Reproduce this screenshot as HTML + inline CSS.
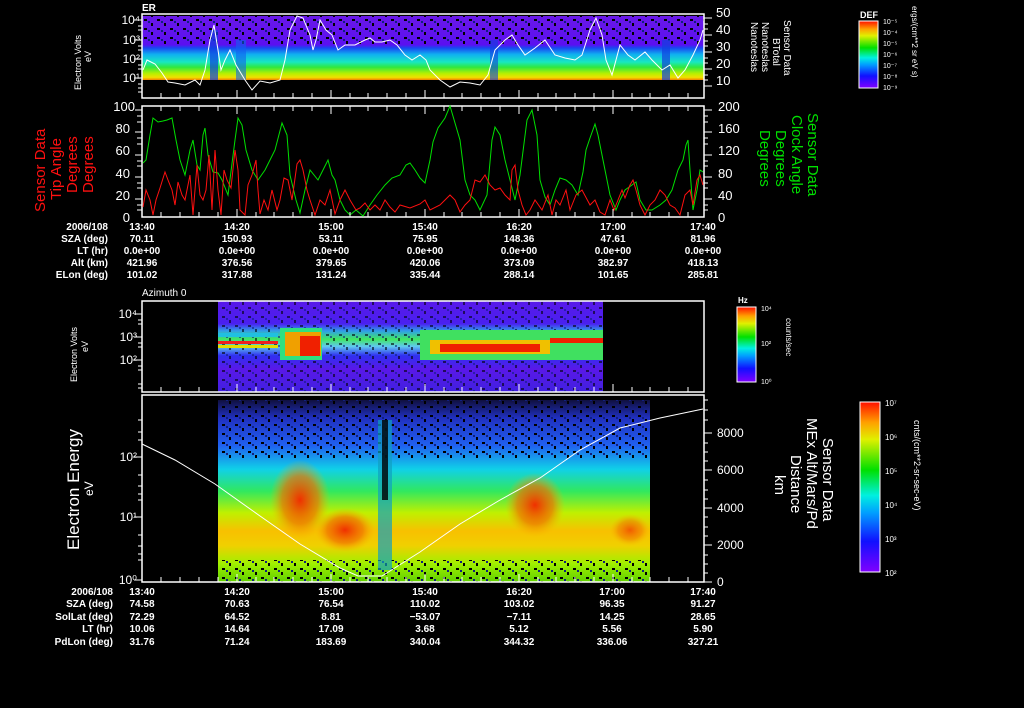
<!DOCTYPE html>
<html><head><meta charset="utf-8"><style>
html,body{margin:0;padding:0;background:#000;}
svg{display:block;}
text{font-family:"Liberation Sans",sans-serif;fill:#fff;}
</style></head><body>
<svg width="1024" height="708" viewBox="0 0 1024 708" xmlns="http://www.w3.org/2000/svg" font-weight="bold">
<defs>
<linearGradient id="g1" x1="0" y1="0" x2="0" y2="1">
<stop offset="0" stop-color="#6a18e8"/><stop offset="0.45" stop-color="#5a10f0"/>
<stop offset="0.5" stop-color="#1848f0"/><stop offset="0.6" stop-color="#10b0f0"/>
<stop offset="0.72" stop-color="#18e8c0"/><stop offset="0.8" stop-color="#30e840"/>
<stop offset="0.9" stop-color="#b8f000"/><stop offset="0.96" stop-color="#f0e000"/><stop offset="1" stop-color="#f08000"/>
</linearGradient>
<linearGradient id="g3" x1="0" y1="0" x2="0" y2="1">
<stop offset="0" stop-color="#5818e8"/><stop offset="0.25" stop-color="#4a20f0"/>
<stop offset="0.33" stop-color="#30a0e8"/><stop offset="0.42" stop-color="#40e860"/>
<stop offset="0.5" stop-color="#60c8f0"/><stop offset="0.6" stop-color="#3030f0"/>
<stop offset="0.75" stop-color="#5a18e8"/><stop offset="1" stop-color="#4020e0"/>
</linearGradient>
<linearGradient id="g4" x1="0" y1="0" x2="0" y2="1">
<stop offset="0" stop-color="#101040"/><stop offset="0.1" stop-color="#2030c0"/>
<stop offset="0.25" stop-color="#2060f0"/><stop offset="0.38" stop-color="#10d0e8"/>
<stop offset="0.5" stop-color="#30e860"/><stop offset="0.62" stop-color="#c0f000"/>
<stop offset="0.72" stop-color="#f8c000"/><stop offset="0.8" stop-color="#f0d000"/>
<stop offset="0.9" stop-color="#a0f000"/><stop offset="1" stop-color="#60d000"/>
</linearGradient>
<linearGradient id="cb" x1="0" y1="1" x2="0" y2="0">
<stop offset="0" stop-color="#8000ff"/><stop offset="0.18" stop-color="#1010ff"/>
<stop offset="0.35" stop-color="#00a0ff"/><stop offset="0.45" stop-color="#00f0e0"/>
<stop offset="0.6" stop-color="#00e000"/><stop offset="0.78" stop-color="#e0f000"/>
<stop offset="0.88" stop-color="#ffa000"/><stop offset="1" stop-color="#ff1000"/>
</linearGradient>
<radialGradient id="hot"><stop offset="0" stop-color="#f03000"/><stop offset="0.6" stop-color="#f07000" stop-opacity="0.7"/><stop offset="1" stop-color="#f8b000" stop-opacity="0"/></radialGradient>
<pattern id="spk" width="13" height="9" patternUnits="userSpaceOnUse">
<rect x="1" y="1" width="3" height="2" fill="#000"/><rect x="8" y="5" width="2" height="3" fill="#000"/><rect x="5" y="3" width="2" height="2" fill="#102080"/>
</pattern>
</defs>

<!-- Panel 1 -->
<text x="142" y="11" font-size="10">ER</text>
<rect x="142" y="16" width="562" height="64" fill="url(#g1)"/>
<rect x="142" y="16" width="562" height="28" fill="url(#spk)"/>
<rect x="210" y="30" width="8" height="50" fill="#1040e0" opacity="0.7"/>
<rect x="236" y="40" width="10" height="40" fill="#1060f0" opacity="0.6"/>
<rect x="490" y="40" width="8" height="40" fill="#1040e0" opacity="0.6"/>
<rect x="662" y="40" width="8" height="40" fill="#1040e0" opacity="0.7"/>
<polyline fill="none" stroke="#fff" stroke-width="1" points="143,70 147,60 155,64 162,73 168,82 175,83 185,85 195,80 200,85 205,70 210,40 214,25 218,50 221,70 225,60 230,50 236,65 245,80 252,90 260,81 270,83 280,80 285,60 290,30 297,16 303,18 310,35 313,50 316,40 320,20 326,30 332,35 338,50 345,45 355,45 365,40 370,38 375,42 382,42 390,40 397,45 405,55 412,60 420,55 426,60 430,70 440,80 450,87 460,82 470,83 480,85 488,75 495,50 505,40 512,35 518,45 525,55 535,48 545,40 555,55 565,58 575,60 582,55 590,30 596,18 602,35 606,60 612,75 620,45 628,55 635,60 645,52 652,60 662,70 670,65 678,78 685,70 693,55 700,40 703,30"/>
<rect x="142" y="14" width="562" height="84" fill="none" stroke="#fff" stroke-width="1.5"/>
<g font-weight="normal">
<text x="140" y="24" font-size="12" text-anchor="end">10⁴</text>
<text x="140" y="44" font-size="12" text-anchor="end">10³</text>
<text x="140" y="63" font-size="12" text-anchor="end">10²</text>
<text x="140" y="82" font-size="12" text-anchor="end">10¹</text>
</g>
<g font-size="13" font-weight="normal">
<text x="716" y="17">50</text><text x="716" y="34">40</text><text x="716" y="51">30</text><text x="716" y="68">20</text><text x="716" y="85">10</text></g>
<g font-weight="normal">
<text transform="translate(81,90) rotate(-90)" font-size="9">Electron Volts</text>
<text transform="translate(91,62) rotate(-90)" font-size="9">eV</text>
</g>
<g font-size="10" font-weight="normal">
<text transform="translate(784,20) rotate(90)">Sensor Data</text>
<text transform="translate(773,38) rotate(90)">BTotal</text>
<text transform="translate(762,22) rotate(90)">Nanoteslas</text>
<text transform="translate(751,22) rotate(90)">Nanoteslas</text>
</g>
<text x="860" y="18" font-size="9">DEF</text>
<rect x="859" y="21" width="19" height="67" fill="url(#cb)" stroke="#fff"/>
<g font-size="7" font-weight="normal"><text x="883" y="24">10⁻⁵</text><text x="883" y="35">10⁻⁴</text><text x="883" y="46">10⁻⁵</text><text x="883" y="57">10⁻⁶</text><text x="883" y="68">10⁻⁷</text><text x="883" y="79">10⁻⁸</text><text x="883" y="90">10⁻⁹</text></g>
<text transform="translate(912,6) rotate(90)" font-size="8" font-weight="normal">ergs/(cm**2 sr eV s)</text>

<!-- Panel 2 -->
<rect x="142" y="106" width="562" height="111" fill="none" stroke="#fff" stroke-width="1.5"/>
<g font-size="13" font-weight="normal">
<text x="135" y="111" text-anchor="end">100</text><text x="130" y="133" text-anchor="end">80</text>
<text x="130" y="155" text-anchor="end">60</text><text x="130" y="178" text-anchor="end">40</text>
<text x="130" y="200" text-anchor="end">20</text><text x="130" y="222" text-anchor="end">0</text>
<text x="718" y="111">200</text><text x="718" y="133">160</text><text x="718" y="155">120</text>
<text x="718" y="178">80</text><text x="718" y="200">40</text><text x="718" y="222">0</text></g>
<polyline fill="none" stroke="#00e000" stroke-width="1" points="143,163 146,160 150,135 153,118 158,122 163,121 167,120 172,118 176,140 180,160 185,175 190,150 193,140 197,165 200,170 203,135 205,128 208,155 213,172 218,173 222,180 228,195 235,140 238,118 242,125 246,150 252,170 258,180 265,170 270,160 275,150 282,123 287,135 290,175 296,200 300,213 305,190 310,170 318,180 323,170 328,160 332,175 335,180 340,200 345,210 350,215 356,210 363,216 370,205 377,195 385,185 392,178 400,175 406,165 410,163 415,170 420,178 425,183 430,160 433,142 438,128 445,118 450,106 455,123 460,140 465,180 470,195 475,200 480,210 487,195 492,140 495,127 500,135 505,160 510,180 515,200 520,175 527,120 532,110 537,135 540,180 545,197 550,205 555,190 560,178 566,180 572,185 578,195 583,172 586,150 590,138 595,124 598,135 603,160 606,175 610,195 616,210 620,200 625,190 632,185 636,182 640,200 646,210 652,210 660,205 666,200 672,190 678,170 683,160 686,145 688,140 690,170 693,210 697,190 700,170 703,172"/>
<polyline fill="none" stroke="#ff1010" stroke-width="1" points="143,207 146,190 150,200 153,215 156,200 160,188 165,172 168,180 172,190 175,205 178,182 182,195 185,200 190,175 193,215 197,165 200,195 203,200 206,190 209,155 212,210 215,150 218,190 221,215 224,170 227,180 231,188 235,150 238,170 240,210 245,215 248,185 252,175 256,160 258,190 260,214 264,200 268,210 272,190 277,210 280,200 284,178 288,180 292,200 297,164 300,160 303,170 307,190 310,200 315,215 320,200 325,205 330,190 335,214 340,200 345,190 350,200 356,210 360,208 365,203 370,210 375,205 380,210 385,200 390,207 395,212 400,205 410,208 420,204 425,200 430,210 440,205 450,195 455,200 460,212 465,205 470,200 475,180 480,182 485,175 490,185 495,190 500,188 505,195 510,200 512,170 515,165 518,190 522,205 526,215 530,210 535,200 542,210 548,195 552,215 556,200 560,205 566,190 570,210 576,195 582,190 590,205 595,200 600,212 605,215 610,200 614,210 618,200 622,190 625,198 630,185 633,180 636,190 640,205 645,215 650,205 655,200 660,190 665,195 670,205 675,208 680,215 685,195 690,190 693,205 697,180 700,175 703,185"/>
<g font-size="15" font-weight="normal">
<text transform="translate(45,212) rotate(-90)" style="fill:#ff1010">Sensor Data</text>
<text transform="translate(61,200) rotate(-90)" style="fill:#ff1010">Tip Angle</text>
<text transform="translate(77,193) rotate(-90)" style="fill:#ff1010">Degrees</text>
<text transform="translate(93,193) rotate(-90)" style="fill:#ff1010">Degrees</text>
</g>
<g font-size="15" font-weight="normal">
<text transform="translate(808,113) rotate(90)" style="fill:#00e000">Sensor Data</text>
<text transform="translate(792,115) rotate(90)" style="fill:#00e000">Clock Angle</text>
<text transform="translate(776,130) rotate(90)" style="fill:#00e000">Degrees</text>
<text transform="translate(760,130) rotate(90)" style="fill:#00e000">Degrees</text>
</g>
<g font-size="10">
<g text-anchor="end"><text x="108" y="230">2006/108</text><text x="108" y="242">SZA (deg)</text><text x="108" y="254">LT (hr)</text><text x="108" y="266">Alt (km)</text><text x="108" y="278">ELon (deg)</text></g>
<g text-anchor="middle">
<text x="142" y="230">13:40</text><text x="142" y="242">70.11</text><text x="142" y="254">0.0e+00</text><text x="142" y="266">421.96</text><text x="142" y="278">101.02</text>
<text x="237" y="230">14:20</text><text x="237" y="242">150.93</text><text x="237" y="254">0.0e+00</text><text x="237" y="266">376.56</text><text x="237" y="278">317.88</text>
<text x="331" y="230">15:00</text><text x="331" y="242">53.11</text><text x="331" y="254">0.0e+00</text><text x="331" y="266">379.65</text><text x="331" y="278">131.24</text>
<text x="425" y="230">15:40</text><text x="425" y="242">75.95</text><text x="425" y="254">0.0e+00</text><text x="425" y="266">420.06</text><text x="425" y="278">335.44</text>
<text x="519" y="230">16:20</text><text x="519" y="242">148.36</text><text x="519" y="254">0.0e+00</text><text x="519" y="266">373.09</text><text x="519" y="278">288.14</text>
<text x="613" y="230">17:00</text><text x="613" y="242">47.61</text><text x="613" y="254">0.0e+00</text><text x="613" y="266">382.97</text><text x="613" y="278">101.65</text>
<text x="703" y="230">17:40</text><text x="703" y="242">81.96</text><text x="703" y="254">0.0e+00</text><text x="703" y="266">418.13</text><text x="703" y="278">285.81</text>
</g></g>

<!-- Panel 3 -->
<text x="142" y="296" font-size="10" font-weight="normal">Azimuth 0</text>
<rect x="218" y="301" width="385" height="91" fill="url(#g3)"/>
<rect x="218" y="301" width="385" height="91" fill="url(#spk)" opacity="0.6"/>
<rect x="218" y="333" width="60" height="4" fill="#20c0e0"/>
<rect x="218" y="341" width="60" height="3" fill="#f02020"/>
<rect x="218" y="345" width="60" height="3" fill="#e0e000"/>
<rect x="280" y="328" width="42" height="32" fill="#30e080"/>
<rect x="285" y="332" width="36" height="24" fill="#f0a000"/>
<rect x="300" y="336" width="20" height="20" fill="#f02000"/>
<rect x="420" y="330" width="183" height="30" fill="#40e060"/>
<rect x="430" y="340" width="120" height="14" fill="#f0c000"/>
<rect x="440" y="344" width="100" height="8" fill="#f02000"/>
<rect x="550" y="338" width="53" height="5" fill="#f02000"/>
<rect x="142" y="301" width="562" height="91" fill="none" stroke="#fff" stroke-width="1.5"/>
<g font-size="12" font-weight="normal"><text x="137" y="318" text-anchor="end">10⁴</text><text x="137" y="341" text-anchor="end">10³</text><text x="137" y="364" text-anchor="end">10²</text></g>
<text transform="translate(77,382) rotate(-90)" font-size="9" font-weight="normal">Electron Volts</text>
<text transform="translate(88,352) rotate(-90)" font-size="9" font-weight="normal">eV</text>
<text x="738" y="303" font-size="8">Hz</text>
<rect x="737" y="307" width="19" height="75" fill="url(#cb)" stroke="#fff"/>
<g font-size="7" font-weight="normal"><text x="761" y="311">10⁴</text><text x="761" y="346">10²</text><text x="761" y="384">10⁰</text></g>
<text transform="translate(786,318) rotate(90)" font-size="8" font-weight="normal">counts/sec</text>

<!-- Panel 4 -->
<rect x="218" y="400" width="432" height="182" fill="url(#g4)"/>
<rect x="218" y="400" width="432" height="60" fill="url(#spk)"/>
<rect x="218" y="560" width="432" height="22" fill="url(#spk)"/>
<ellipse cx="300" cy="500" rx="30" ry="40" fill="url(#hot)"/>
<ellipse cx="345" cy="530" rx="30" ry="22" fill="url(#hot)"/>
<ellipse cx="535" cy="505" rx="30" ry="32" fill="url(#hot)"/>
<ellipse cx="630" cy="530" rx="20" ry="16" fill="url(#hot)" opacity="0.7"/>
<rect x="378" y="420" width="14" height="150" fill="#10a0c0" opacity="0.7"/>
<rect x="382" y="420" width="6" height="80" fill="#000" opacity="0.8"/>
<polyline fill="none" stroke="#fff" stroke-width="1" points="142,444 175,460 215,484 260,516 300,544 340,568 358,576 382,576 420,552 460,524 500,500 540,478 580,450 620,428 660,418 703,409"/>
<rect x="142" y="395" width="562" height="187" fill="none" stroke="#fff" stroke-width="1.5"/>
<g font-size="12" font-weight="normal">
<text x="137" y="461" text-anchor="end">10²</text><text x="137" y="521" text-anchor="end">10¹</text><text x="137" y="584" text-anchor="end">10⁰</text>
<text x="717" y="437">8000</text><text x="717" y="474">6000</text><text x="717" y="512">4000</text><text x="717" y="549">2000</text><text x="717" y="586">0</text></g>
<text transform="translate(79,550) rotate(-90)" font-size="17" font-weight="normal">Electron Energy</text>
<text transform="translate(93,496) rotate(-90)" font-size="12" font-weight="normal">eV</text>
<g font-size="15" font-weight="normal">
<text transform="translate(823,438) rotate(90)">Sensor Data</text>
<text transform="translate(807,418) rotate(90)">MEx Alt/Mars/Pd</text>
<text transform="translate(791,455) rotate(90)">Distance</text>
<text transform="translate(775,475) rotate(90)">km</text>
</g>
<rect x="860" y="402" width="20" height="170" fill="url(#cb)" stroke="#fff"/>
<g font-size="8" font-weight="normal"><text x="885" y="406">10⁷</text><text x="885" y="440">10⁶</text><text x="885" y="474">10⁵</text><text x="885" y="508">10⁴</text><text x="885" y="542">10³</text><text x="885" y="576">10²</text></g>
<text transform="translate(914,420) rotate(90)" font-size="9" font-weight="normal">cnts/(cm**2-sr-sec-eV)</text>
<g font-size="10">
<g text-anchor="end"><text x="113" y="595">2006/108</text><text x="113" y="607">SZA (deg)</text><text x="113" y="620">SolLat (deg)</text><text x="113" y="632">LT (hr)</text><text x="113" y="645">PdLon (deg)</text></g>
<g text-anchor="middle">
<text x="142" y="595">13:40</text><text x="142" y="607">74.58</text><text x="142" y="620">72.29</text><text x="142" y="632">10.06</text><text x="142" y="645">31.76</text>
<text x="237" y="595">14:20</text><text x="237" y="607">70.63</text><text x="237" y="620">64.52</text><text x="237" y="632">14.64</text><text x="237" y="645">71.24</text>
<text x="331" y="595">15:00</text><text x="331" y="607">76.54</text><text x="331" y="620">8.81</text><text x="331" y="632">17.09</text><text x="331" y="645">183.69</text>
<text x="425" y="595">15:40</text><text x="425" y="607">110.02</text><text x="425" y="620">−53.07</text><text x="425" y="632">3.68</text><text x="425" y="645">340.04</text>
<text x="519" y="595">16:20</text><text x="519" y="607">103.02</text><text x="519" y="620">−7.11</text><text x="519" y="632">5.12</text><text x="519" y="645">344.32</text>
<text x="612" y="595">17:00</text><text x="612" y="607">96.35</text><text x="612" y="620">14.25</text><text x="612" y="632">5.56</text><text x="612" y="645">336.06</text>
<text x="703" y="595">17:40</text><text x="703" y="607">91.27</text><text x="703" y="620">28.65</text><text x="703" y="632">5.90</text><text x="703" y="645">327.21</text>
</g></g>

<!-- ticks -->
<g stroke="#fff" stroke-width="1">
<path d="M161,98v-5M180,98v-5M199,98v-5M218,98v-5M237,98v-8M256,98v-5M274,98v-5M293,98v-5M312,98v-5M331,98v-8M350,98v-5M368,98v-5M387,98v-5M406,98v-5M425,98v-8M444,98v-5M462,98v-5M481,98v-5M500,98v-5M519,98v-8M538,98v-5M556,98v-5M575,98v-5M594,98v-5M613,98v-8M632,98v-5M650,98v-5M669,98v-5M688,98v-5"/>
<path d="M161,217v-5M180,217v-5M199,217v-5M218,217v-5M237,217v-8M256,217v-5M274,217v-5M293,217v-5M312,217v-5M331,217v-8M350,217v-5M368,217v-5M387,217v-5M406,217v-5M425,217v-8M444,217v-5M462,217v-5M481,217v-5M500,217v-5M519,217v-8M538,217v-5M556,217v-5M575,217v-5M594,217v-5M613,217v-8M632,217v-5M650,217v-5M669,217v-5M688,217v-5"/>
<path d="M161,106v5M180,106v5M199,106v5M218,106v5M237,106v8M256,106v5M274,106v5M293,106v5M312,106v5M331,106v8M350,106v5M368,106v5M387,106v5M406,106v5M425,106v8M444,106v5M462,106v5M481,106v5M500,106v5M519,106v8M538,106v5M556,106v5M575,106v5M594,106v5M613,106v8M632,106v5M650,106v5M669,106v5M688,106v5"/>
<path d="M161,392v-5M180,392v-5M199,392v-5M237,392v-8M256,392v-5M274,392v-5M293,392v-5M312,392v-5M331,392v-8M350,392v-5M368,392v-5M387,392v-5M406,392v-5M425,392v-8M444,392v-5M462,392v-5M481,392v-5M500,392v-5M519,392v-8M538,392v-5M556,392v-5M575,392v-5M594,392v-5M613,392v-8M632,392v-5M650,392v-5M669,392v-5M688,392v-5"/>
<path d="M161,582v-5M180,582v-5M199,582v-5M218,582v-5M237,582v-8M256,582v-5M274,582v-5M293,582v-5M312,582v-5M331,582v-8M350,582v-5M368,582v-5M387,582v-5M406,582v-5M425,582v-8M444,582v-5M462,582v-5M481,582v-5M500,582v-5M519,582v-8M538,582v-5M556,582v-5M575,582v-5M594,582v-5M613,582v-8M632,582v-5M650,582v-5M669,582v-5M688,582v-5"/>
<path d="M135,110h7M137,116h5M137,122h5M135,132h7M137,138h5M137,144h5M135,155h7M137,161h5M137,166h5M135,177h7M137,183h5M137,188h5M135,199h7M137,205h5M137,210h5"/>
<path d="M704,110h8M704,116h4M704,122h4M704,132h8M704,138h4M704,144h4M704,155h8M704,161h4M704,166h4M704,177h8M704,183h4M704,188h4M704,199h8M704,205h4M704,210h4"/>
<path d="M704,18h8M704,35h8M704,52h8M704,69h8M704,86h8M704,24h4M704,29h4M704,41h4M704,46h4M704,58h4M704,63h4M704,75h4M704,80h4"/>
<path d="M142,20h-8M142,40h-8M142,59h-8M142,78h-8M142,26h-4M142,30h-4M142,46h-4M142,50h-4M142,65h-4M142,69h-4M142,84h-4M142,88h-4M142,92h-4"/>
<path d="M142,314h-8M142,337h-8M142,360h-8M142,320h-4M142,324h-4M142,343h-4M142,347h-4M142,366h-4M142,370h-4M142,384h-4M142,388h-4"/>
<path d="M142,457h-8M142,517h-8M142,580h-8M142,475h-4M142,486h-4M142,494h-4M142,500h-4M142,535h-4M142,546h-4M142,554h-4M142,560h-4M142,420h-4M142,432h-4M142,440h-4"/>
<path d="M704,433h8M704,470h8M704,508h8M704,545h8M704,582h8M704,400h4M704,410h4M704,420h4M704,443h4M704,452h4M704,461h4M704,480h4M704,490h4M704,499h4M704,517h4M704,527h4M704,536h4M704,555h4M704,564h4M704,573h4"/>
</g>
</svg>
</body></html>
